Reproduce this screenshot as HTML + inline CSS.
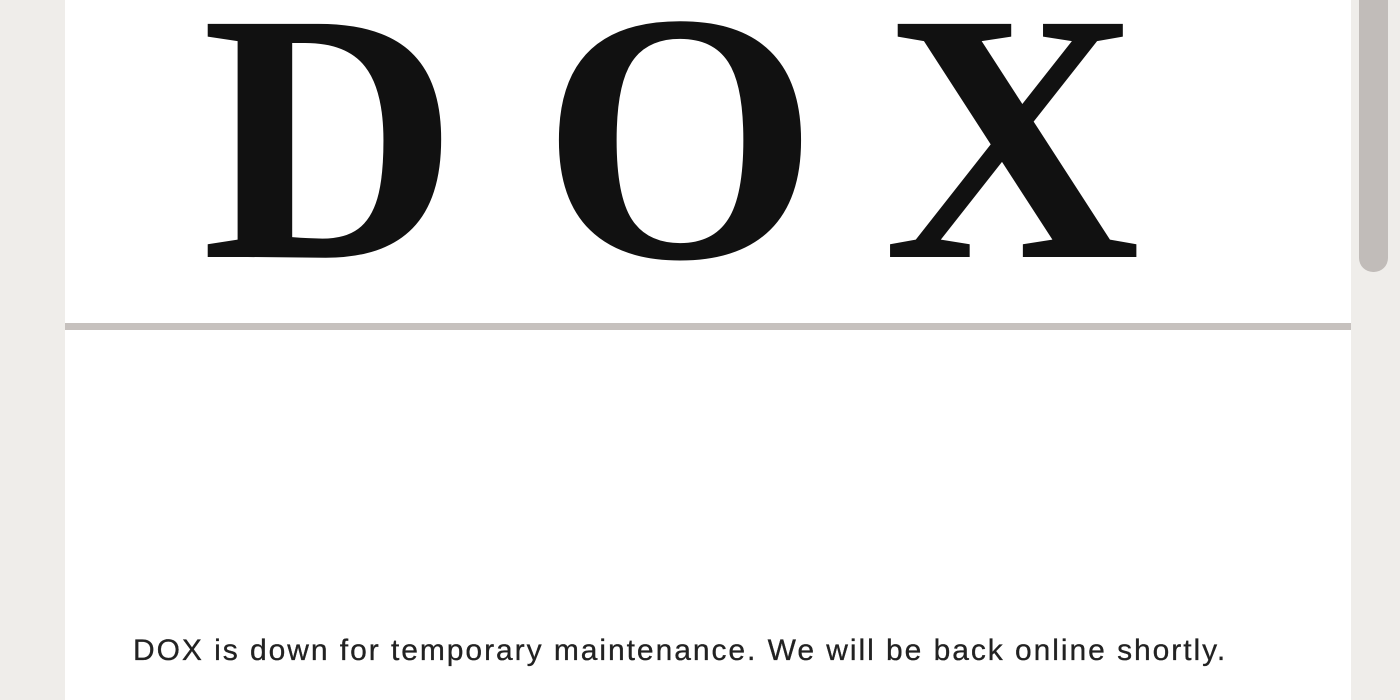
<!DOCTYPE html>
<html><head><style>
html,body{margin:0;padding:0;width:1400px;height:700px;overflow:hidden;background:#efedea;}
.main{position:absolute;left:65px;top:0;width:1286px;height:700px;background:#fff;}
.l{position:absolute;top:-40px;font:bold 356px/1 "Liberation Serif",serif;color:#111;width:300px;text-align:center;}
.line{position:absolute;left:65px;top:323px;width:1286px;height:7px;background:#c6c1be;}
.thumb{position:absolute;left:1359px;top:-20px;width:29px;height:292px;background:#c1bcb9;border-radius:14px;}
.t{position:absolute;left:133px;top:633px;font:30px/1.2 "Liberation Sans",sans-serif;color:#222;white-space:nowrap;letter-spacing:1.95px;-webkit-text-stroke:0.3px #222;}
</style></head><body>
<div class="main"></div>
<div class="l" style="left:180px">D</div>
<div class="l" style="left:530px">O</div>
<div class="l" style="left:862px">X</div>
<div class="line"></div>
<div class="thumb"></div>
<div class="t">DOX is down for temporary maintenance. We will be back online shortly.</div>
</body></html>
